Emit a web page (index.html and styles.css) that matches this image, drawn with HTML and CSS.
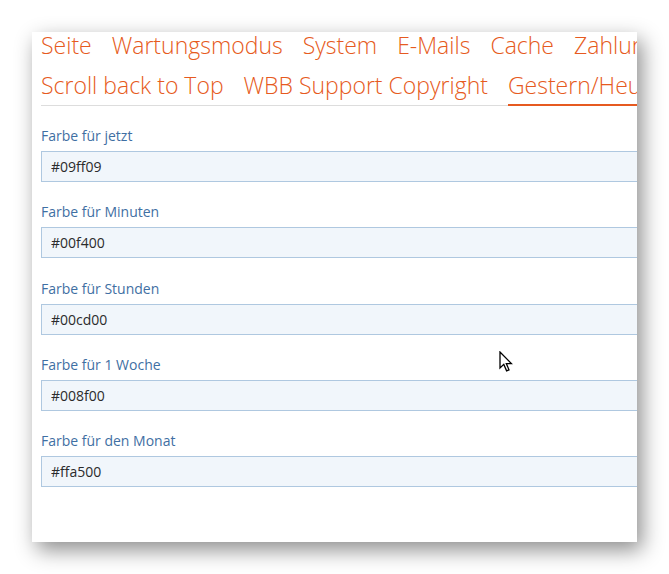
FILE: index.html
```html
<!DOCTYPE html>
<html lang="de">
<head>
<meta charset="utf-8">
<title>Optionen</title>
<link rel="stylesheet" href="styles.css">
</head>
<body>
<div class="window">
  <nav class="tabs">
    <ul class="tab-row">
      <li>Seite</li>
      <li>Wartungsmodus</li>
      <li>System</li>
      <li>E-Mails</li>
      <li>Cache</li>
      <li>Zahlungsdienste</li>
    </ul>
    <ul class="tab-row">
      <li>Scroll back to Top</li>
      <li>WBB Support Copyright</li>
      <li class="active">Gestern/Heute</li>
    </ul>
  </nav>
  <div class="fields">
    <div class="field">
      <label class="label">Farbe für jetzt</label>
      <input class="input" type="text" value="#09ff09">
    </div>
    <div class="field">
      <label class="label">Farbe für Minuten</label>
      <input class="input" type="text" value="#00f400">
    </div>
    <div class="field">
      <label class="label">Farbe für Stunden</label>
      <input class="input" type="text" value="#00cd00">
    </div>
    <div class="field">
      <label class="label">Farbe für 1 Woche</label>
      <input class="input" type="text" value="#008f00">
    </div>
    <div class="field">
      <label class="label">Farbe für den Monat</label>
      <input class="input" type="text" value="#ffa500">
    </div>
  </div>
  <svg class="cursor" width="14" height="21" viewBox="0 0 14 21" aria-hidden="true">
    <path d="M1 1 L1 17 L4.8 13.4 L7.6 19.8 L10 18.8 L7.3 12.6 L12.4 12.6 Z" fill="#fff" stroke="#000" stroke-width="1.3" stroke-linejoin="miter"/>
  </svg>
</div>
</body>
</html>
```
FILE: styles.css
```css
html, body {
  margin: 0;
  padding: 0;
  background: #ffffff;
}

body {
  font-family: "Open Sans", "Liberation Sans", sans-serif;
  min-height: 574px;
  padding-top: 32px;
  box-sizing: border-box;
}

.window {
  position: relative;
  margin: 0 0 0 32px;
  width: 605px;
  height: 510px;
  background: #ffffff;
  overflow: hidden;
  box-shadow: 5px 8px 20px rgba(0, 0, 0, 0.45);
  padding-left: 9px;
  box-sizing: border-box;
}

.tabs {
  margin-top: -7px;
  width: 900px;
  border-bottom: 1px solid #dddddd;
}

.tab-row {
  list-style: none;
  margin: 0;
  padding: 0;
  display: flex;
  gap: 20px;
  white-space: nowrap;
}

.tab-row li {
  font-size: 23px;
  line-height: 40px;
  color: #e65a20;
  font-weight: 300;
}

.tab-row li.active {
  box-shadow: inset 0 -2px 0 #e65a20;
  margin-bottom: -1px;
  padding-bottom: 1px;
}

.fields {
  margin-top: 20px;
  display: flex;
  flex-direction: column;
  gap: 20.3px;
}

.field {
  display: flex;
  flex-direction: column;
}

.label {
  font-size: 14px;
  line-height: 20px;
  color: #3f6fa3;
  margin-bottom: 5px;
}

.input {
  box-sizing: border-box;
  width: 700px;
  height: 31px;
  margin: 0;
  padding: 0 9px;
  border: 1px solid #afc8e0;
  background: #f1f6fb;
  font-family: "Open Sans", "Liberation Sans", sans-serif;
  font-size: 14px;
  color: #2b2b2b;
  outline: none;
}

.cursor {
  position: absolute;
  left: 467px;
  top: 319px;
}
```
